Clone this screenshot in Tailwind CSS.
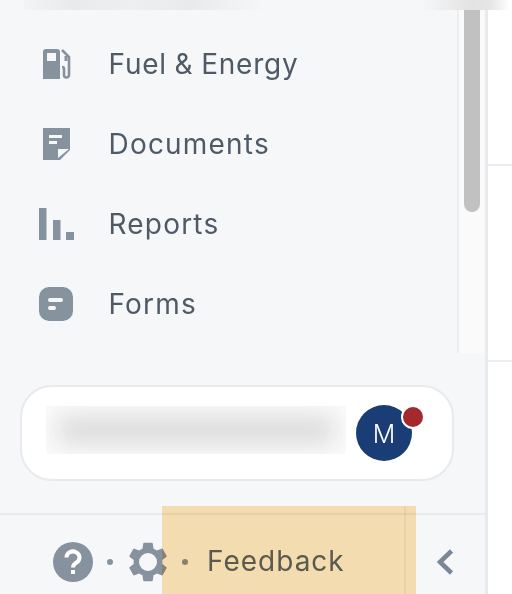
<!DOCTYPE html>
<html lang="en">
<head>
  <meta charset="UTF-8" />
  <title>Sidebar</title>
  <script src="https://cdn.jsdelivr.net/npm/@tailwindcss/browser@4"></script>
</head>
<body class="w-[512px] h-[594px] overflow-hidden bg-white font-['Inter',sans-serif]">
  <div class="relative flex w-[512px] h-[594px]">
    <!-- sidebar -->
    <aside class="flex flex-col w-[488px] h-[594px] bg-[#f6f7f9] border-r-[3px] border-[#e9eaee]">
      <div class="flex h-[353px]">
        <div class="flex-1 min-w-0">
          <nav class="flex flex-col pt-[24px] text-[#4f5a67] text-[28px] leading-[80px] tracking-[1.2px]">
            <a class="flex items-center h-[80px]">
              <span class="flex w-[108.5px] pl-[43px]">
                <svg width="28" height="30" viewBox="0 0 28 30"><path fill="#87929f" fill-rule="evenodd" d="M3 0h11a3 3 0 0 1 3 3v27H0V3a3 3 0 0 1 3-3zm1 4v8h9V4z"/><path fill="none" stroke="#87929f" stroke-width="2.600" d="M19 1l7 7v18a2.500 2.500 0 0 1-5 0v-6q0-2-2-2"/><path fill="#87929f" d="M21.500 7h3v5h-3z"/></svg>
              </span>
              <span class="tracking-[0.8px] [word-spacing:-1px]">Fuel &amp; Energy</span>
            </a>
            <a class="flex items-center h-[80px]">
              <span class="flex w-[108.5px] pl-[43px]">
                <svg width="27" height="32" viewBox="0 0 27 32"><path fill="#87929f" d="M0 0h27v22L17 32H0z"/><path fill="#f6f7f9" d="M6 7h13v3H6zM6 13h8v3H6zM15 30v-9h11z"/></svg>
              </span>
              <span>Documents</span>
            </a>
            <a class="flex items-center h-[80px]">
              <span class="flex w-[108.5px] pl-[39px]">
                <svg width="35" height="32" viewBox="0 0 35 32"><path fill="#87929f" d="M0 0h7.500v32H0zM14 12h7.500v20H14zM27 24h8v8h-8z"/></svg>
              </span>
              <span>Reports</span>
            </a>
            <a class="flex items-center h-[80px]">
              <span class="flex w-[108.5px] pl-[39px]">
                <svg width="34" height="34" viewBox="0 0 34 34"><rect width="34" height="34" rx="10" fill="#87929f"/><rect x="9" y="11" width="15" height="4" rx="2" fill="#f6f7f9"/><rect x="9" y="19" width="8" height="4" rx="2" fill="#f6f7f9"/></svg>
              </span>
              <span>Forms</span>
            </a>
          </nav>
        </div>
        <!-- scrollbar -->
        <div class="w-[28px] h-full bg-[#fafafa] border-l-[2px] border-[#ecedf0] pl-[5px]">
          <div class="w-[16px] h-[212px] bg-[#c1c1c1] rounded-b-full"></div>
        </div>
      </div>

      <!-- account card -->
      <div class="flex-1 flex flex-col">
        <div class="h-[160px] px-[20px] pt-[32px]">
          <div class="flex items-center w-[434px] h-[96px] bg-white border-2 border-[#e9eaee] rounded-[32px] pl-[24px]">
            <div class="w-[300px] h-[48px] mb-[6px] overflow-hidden bg-[#fbfbfb]">
              <div class="h-[48px] py-[10px] px-[12px]"><div class="h-[28px] bg-[#dadada] blur-[12px]"></div></div>
            </div>
            <div class="relative flex items-center justify-center ml-[10px] w-[56px] h-[56px] pt-[3px] rounded-full bg-[#1a3d75] text-white text-[25px] font-light">
              M
              <span class="absolute top-[0px] right-[-13px] w-[24px] h-[24px] rounded-full bg-[#a32a2c] border-[2px] border-white"></span>
            </div>
          </div>
        </div>
        <!-- footer -->
        <div class="flex items-center flex-1 border-t-[2px] border-[#e9eaee] pt-[15px] pl-[53px] text-[#5c6570]">
          <svg width="40" height="40" viewBox="0 0 40 40"><circle cx="20" cy="20" r="20" fill="#87929f"/><path fill="none" stroke="#fff" stroke-width="4" d="M13.500 15.500a6.500 6 0 1 1 10 5q-3.500 2-3.500 5"/><rect x="18" y="28" width="4" height="4" fill="#fff"/></svg>
          <span class="ml-[14px] w-[6px] h-[6px] rounded-full bg-[#87929f]"></span>
          <svg width="38" height="40" viewBox="2.600 2 18.800 20" class="ml-[16px]"><path fill="#87929f" fill-rule="evenodd" d="M19.140 12.940c.04-.3.06-.61.06-.94 0-.32-.02-.64-.07-.94l2.030-1.580c.18-.14.23-.41.12-.61l-1.920-3.320c-.12-.22-.37-.29-.59-.22l-2.390.96c-.5-.38-1.030-.7-1.620-.94l-.36-2.540c-.04-.24-.24-.41-.48-.41h-3.840c-.24 0-.43.17-.47.41l-.36 2.540c-.59.24-1.130.57-1.620.94l-2.390-.96c-.22-.08-.47 0-.59.22L2.740 8.870c-.12.21-.08.47.12.61l2.030 1.580c-.05.3-.09.63-.09.94s.02.64.07.94l-2.030 1.580c-.18.14-.23.41-.12.61l1.920 3.320c.12.22.37.29.59.22l2.390-.96c.5.38 1.030.7 1.620.94l.36 2.540c.05.24.24.41.48.41h3.840c.24 0 .44-.17.47-.41l.36-2.540c.59-.24 1.130-.56 1.620-.94l2.390.96c.22.08.47 0 .59-.22l1.920-3.320c.12-.22.07-.47-.12-.61l-2.010-1.580zM12 7.500a4.500 4.500 0 1 0 0 9 4.500 4.500 0 0 0 0-9z"/></svg>
          <span class="ml-[15px] w-[6px] h-[6px] rounded-full bg-[#87929f]"></span>
          <span class="ml-[19px] mb-[2px] text-[28px] tracking-[1px]">Feedback</span>
          <svg width="18" height="26" viewBox="0 0 18 26" class="ml-[91px]"><path fill="none" stroke="#7a8796" stroke-width="4.500" d="M15.500 2 4 13l11.500 11"/></svg>
        </div>
      </div>
    </aside>

    <!-- page behind -->
    <div class="flex-1 flex flex-col">
      <div class="h-[166px] border-b-[2px] border-[#ecedf0]"></div>
      <div class="h-[196px] border-b-[2px] border-[#ecedf0]"></div>
    </div>

    <!-- blurred strip along the top edge -->
    <div class="absolute left-[24px] top-0 w-[486px] h-[10px] bg-[linear-gradient(90deg,#f2f3f5_0%,#e9eaeb_10%,#eeeff0_22%,#e9eaeb_34%,#f6f7f9_50%,#f6f7f9_82%,#e3e3e3_92%,#e6e6e6_96%,#ffffff_100%)]"></div>

    <!-- orange highlight over the footer -->
    <div class="absolute left-[162px] top-[506px] w-[254px] h-[88px] bg-[#fbe3b4] mix-blend-multiply pr-[10px]">
      <div class="h-full border-r-[2px] border-[#f1daad]"></div>
    </div>
  </div>
</body>
</html>
